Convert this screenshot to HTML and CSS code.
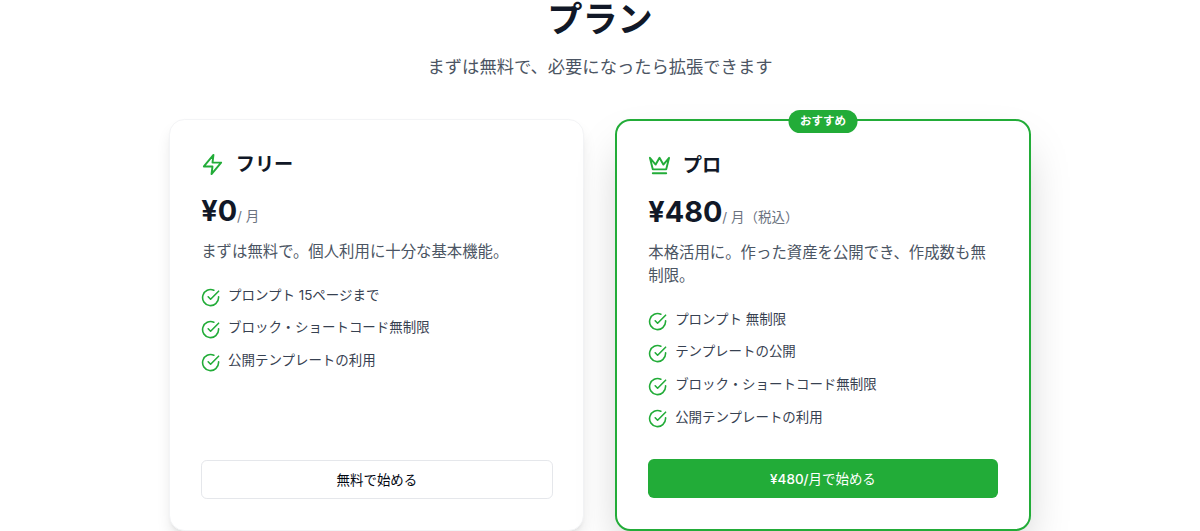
FILE: index.html
```html
<!DOCTYPE html>
<html lang="ja">
<head>
    <meta charset="UTF-8">
    <meta name="viewport" content="width=device-width, initial-scale=1.0">
    <title>プラン</title>
    <link rel="stylesheet" href="styles.css">
</head>
<body>
    <svg class="sprite" aria-hidden="true">
        <symbol id="check" viewBox="0 0 24 24">
            <path d="M22 11.08V12a10 10 0 1 1-5.93-9.14"/>
            <path d="m9 11 3 3L22 4"/>
        </symbol>
    </svg>

    <section class="pricing">
        <h2 class="pricing-title">プラン</h2>
        <p class="pricing-lead">まずは無料で、必要になったら拡張できます</p>

        <div class="plans">
            <div class="plan">
                <div class="plan-header">
                    <svg class="plan-icon" viewBox="0 0 24 24"><path d="M13 2 3 14h9l-1 8 10-12h-9l1-8z"/></svg>
                    <h3>フリー</h3>
                </div>
                <div class="price"><span class="amount">¥0</span><span class="period">/ 月</span></div>
                <p class="description">まずは無料で。個人利用に十分な基本機能。</p>
                <ul class="features">
                    <li><svg><use href="#check"/></svg><span>プロンプト 15ページまで</span></li>
                    <li><svg><use href="#check"/></svg><span>ブロック・ショートコード無制限</span></li>
                    <li><svg><use href="#check"/></svg><span>公開テンプレートの利用</span></li>
                </ul>
                <button class="btn btn-outline" type="button">無料で始める</button>
            </div>

            <div class="plan plan-pro">
                <span class="badge">おすすめ</span>
                <div class="plan-header">
                    <svg class="plan-icon" viewBox="0 0 24 24"><path d="m2 4 3 12h14l3-12-6 7-4-7-4 7-6-7zM5 20h14"/></svg>
                    <h3>プロ</h3>
                </div>
                <div class="price"><span class="amount">¥480</span><span class="period">/ 月（税込）</span></div>
                <p class="description">本格活用に。作った資産を公開でき、作成数も無制限。</p>
                <ul class="features">
                    <li><svg><use href="#check"/></svg><span>プロンプト 無制限</span></li>
                    <li><svg><use href="#check"/></svg><span>テンプレートの公開</span></li>
                    <li><svg><use href="#check"/></svg><span>ブロック・ショートコード無制限</span></li>
                    <li><svg><use href="#check"/></svg><span>公開テンプレートの利用</span></li>
                </ul>
                <button class="btn btn-primary" type="button"><span class="btn-price">¥480/</span>月で始める</button>
            </div>
        </div>
    </section>
</body>
</html>
```
FILE: styles.css
```css
* {
    box-sizing: border-box;
    margin: 0;
    padding: 0;
}
body {
    background: #fff;
    color: #111827;
    font-family: Inter, "Noto Sans CJK JP", sans-serif;
    overflow: hidden;
}
.sprite {
    display: none;
}
svg {
    flex-shrink: 0;
    fill: none;
    stroke: #22ac38;
    stroke-width: 2;
    stroke-linecap: round;
    stroke-linejoin: round;
}
.pricing {
    width: 861px;
    margin: 0 auto;
}
.pricing-title {
    height: 38.5px;
    font-size: 35.2px;
    line-height: 38.5px;
    text-align: center;
}
.pricing-lead {
    margin: 14px 0 39.9px;
    color: #4b5563;
    font-size: 17.3px;
    line-height: 27px;
    text-align: center;
}
.plans {
    display: grid;
    grid-template-columns: 1fr 1fr;
    gap: 31px;
    margin: 0 0 0 -0.1px;
}
.plan {
    position: relative;
    display: flex;
    flex-direction: column;
    height: 411.2px;
    padding: 30.8px;
    background: #fff;
    border: 1px solid #f3f4f6;
    border-radius: 15.4px;
    box-shadow: 0 9.6px 14.4px -2.9px rgba(0, 0, 0, 0.1), 0 3.8px 5.8px -3.8px rgba(0, 0, 0, 0.1);
}
.plan-pro {
    border: 2px solid #22ac38;
    box-shadow: 0 24px 48px -11.5px rgba(0, 0, 0, 0.25);
}
.badge {
    position: absolute;
    top: -11.5px;
    left: 50%;
    transform: translateX(-50%);
    padding: 3.8px 11.5px;
    background: #22ac38;
    border-radius: 12px;
    color: #fff;
    font-size: 11.5px;
    font-weight: 700;
    line-height: 15.4px;
}
.plan-header {
    display: flex;
    align-items: center;
    gap: 11.5px;
    height: 26.5px;
    margin-bottom: 16px;
}
.plan-icon {
    width: 23px;
    height: 23px;
}
.plan-header h3 {
    font-size: 19.2px;
    line-height: 26.5px;
}
.price {
    display: flex;
    align-items: baseline;
    height: 34.6px;
    margin-bottom: 11.5px;
    line-height: 34.6px;
}
.amount {
    font-size: 28.8px;
    font-weight: 700;
}
.period {
    color: #6b7280;
    font-size: 13.5px;
}
.description {
    margin-bottom: 23px;
    color: #4b5563;
    font-size: 15.4px;
    line-height: 23px;
}
.features {
    display: flex;
    flex-direction: column;
    gap: 11.5px;
    list-style: none;
}
.features li {
    display: flex;
    align-items: flex-start;
    gap: 7.7px;
    color: #374151;
    font-size: 13.46px;
    line-height: 19.2px;
}
.features svg {
    width: 19.2px;
    height: 19.2px;
    margin-top: 1.9px;
}
.btn {
    height: 38.4px;
    margin-top: auto;
    padding-bottom: 2px;
    border: 0;
    border-radius: 5.8px;
    font-family: inherit;
    font-size: 13.46px;
    font-weight: 400;
}
.btn-outline {
    background: #fff;
    border: 1px solid #e5e7eb;
    color: #030712;
}
.btn-primary {
    background: #22ac38;
    color: #fff;
}
.btn-price {
    font-weight: 500;
}
```
